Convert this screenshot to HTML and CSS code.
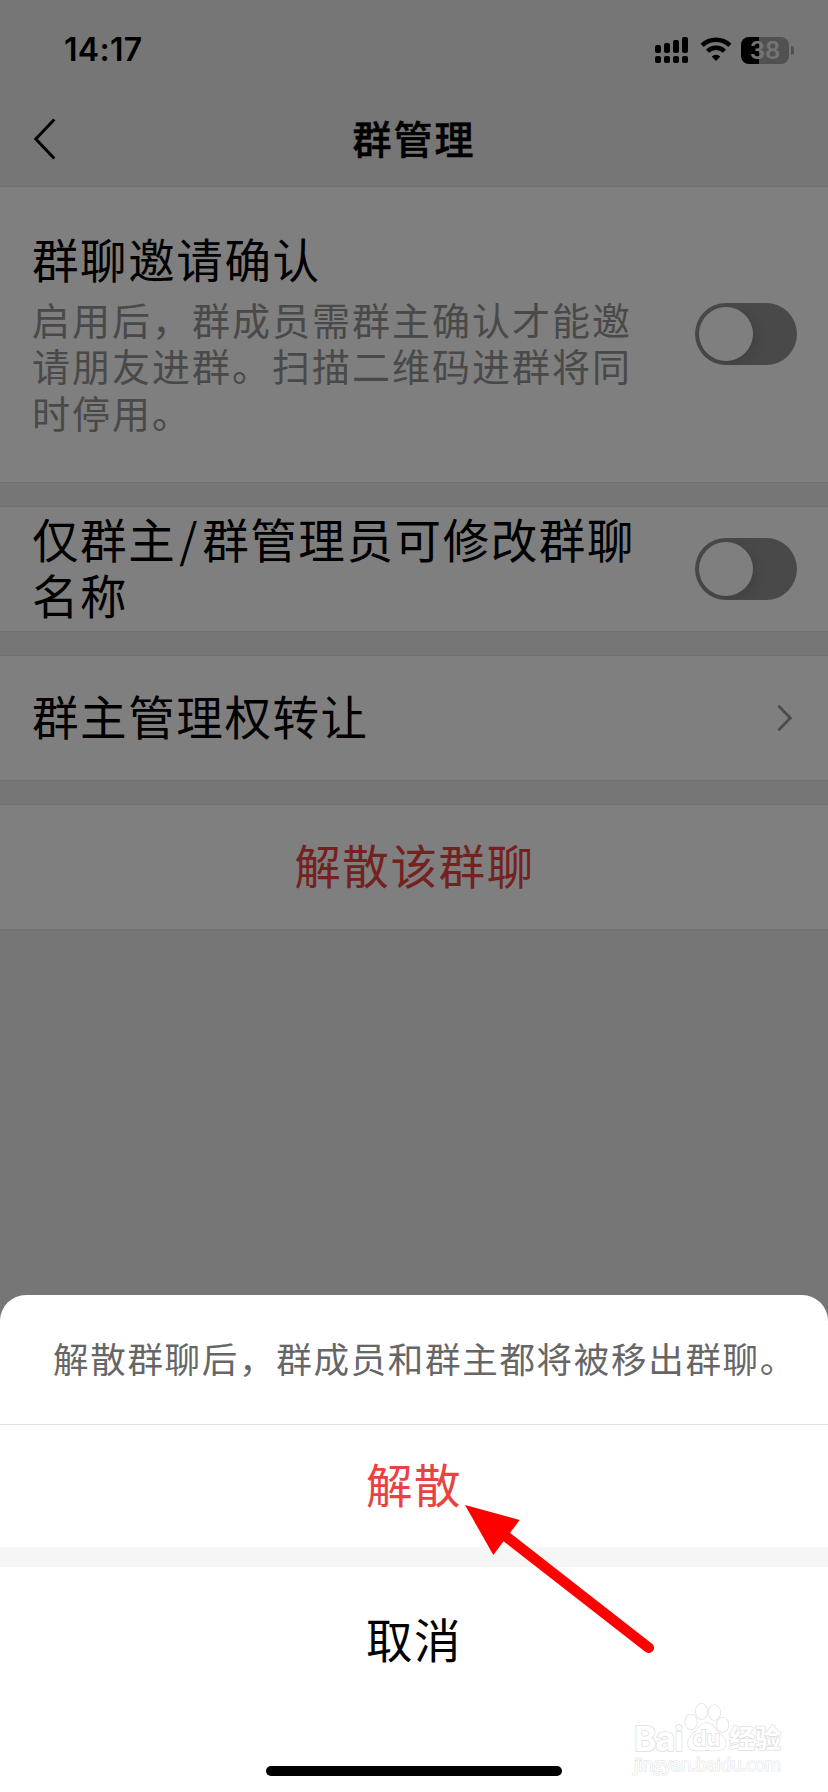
FILE: index.html
```html
<!DOCTYPE html>
<html lang="zh-CN">
<head>
    <meta charset="UTF-8">
    <meta name="viewport" content="width=device-width, initial-scale=1.0">
    <title>群管理</title>
    <link rel="stylesheet" href="styles.css">
</head>
<body>
    <div class="page">
        <div class="status-bar">
            <span class="time">14:17</span>
            <div class="status-icons">
                <svg class="signal" width="34" height="28" viewBox="0 0 34 28">
                    <rect x="0" y="9" width="6" height="8" rx="2"/>
                    <rect x="9" y="7" width="6" height="10" rx="2"/>
                    <rect x="18" y="4" width="6" height="13" rx="2"/>
                    <rect x="27" y="1" width="6" height="16" rx="2"/>
                    <rect x="0" y="20" width="6" height="7" rx="2"/>
                    <rect x="9" y="20" width="6" height="7" rx="2"/>
                    <rect x="18" y="20" width="6" height="7" rx="2"/>
                    <rect x="27" y="20" width="6" height="7" rx="2"/>
                </svg>
                <svg class="wifi" width="34" height="28" viewBox="0 0 34 28">
                    <path d="M2.2 9.4 A19.6 19.6 0 0 1 29.8 9.4" fill="none" stroke="#000" stroke-width="4.6"/>
                    <path d="M7.6 15.2 A11.9 11.9 0 0 1 24.4 15.2" fill="none" stroke="#000" stroke-width="4.4"/>
                    <path d="M11.7 20.5 A6.1 6.1 0 0 1 20.3 20.5 L16 25 Z"/>
                </svg>
                <div class="battery"><span>38</span></div>
                <div class="battery-cap"></div>
            </div>
        </div>

        <div class="nav-bar">
            <svg class="back" width="24" height="44" viewBox="0 0 24 44">
                <path d="M21.3 2.5 L2.8 22 L21.3 41.5" fill="none" stroke="#000" stroke-width="3"/>
            </svg>
            <h1>群管理</h1>
        </div>

        <div class="cell cell-tall">
            <div class="cell-text">
                <h2>群聊邀请确认</h2>
                <p>启用后，群成员需群主确认才能邀请朋友进群。扫描二维码进群将同时停用。</p>
            </div>
            <div class="switch"><div class="knob"></div></div>
        </div>
        <div class="cell">
            <div class="cell-text">
                <h2>仅群主<span class="slash">/</span>群管理员可修改群聊名称</h2>
            </div>
            <div class="switch"><div class="knob"></div></div>
        </div>
        <div class="cell">
            <div class="cell-text">
                <h2>群主管理权转让</h2>
            </div>
            <svg class="arrow-right" width="16" height="28" viewBox="0 0 16 28">
                <path d="M1.5 1.8 L13.3 14 L1.5 26.2" fill="none" stroke="#969696" stroke-width="2.8"/>
            </svg>
        </div>
        <div class="cell cell-center">
            <h2 class="danger">解散该群聊</h2>
        </div>
    </div>

    <div class="mask"></div>

    <div class="sheet">
        <p class="sheet-message">解散群聊后，群成员和群主都将被移出群聊。</p>
        <div class="sheet-item danger">解散</div>
        <div class="sheet-gap"></div>
        <div class="sheet-item cancel">取消</div>
        <div class="home-bar"></div>
    </div>

    <div class="watermark">
        <div class="brand">
            <span class="bai">Bai</span>
            <svg class="paw" width="48" height="50" viewBox="0 0 48 50">
                <g fill="#fff" stroke="#e2e2e2" stroke-width="1.5">
                    <ellipse cx="7" cy="20" rx="5.8" ry="7.3"/>
                    <ellipse cx="17.5" cy="9.3" rx="5.8" ry="7.6"/>
                    <ellipse cx="30.5" cy="10.5" rx="5.8" ry="7.6"/>
                    <ellipse cx="38.7" cy="22.8" rx="5.8" ry="7.3"/>
                    <path d="M22.5 21 C28.5 21 30.5 26 34 30 C37.5 33.5 42 36 41.8 41.5 C41.5 48 36 49.5 22.5 48 C9 49.5 4 48 4 41 C4 36 8 33.5 11.5 29.5 C15 25.5 17 21 22.5 21 Z"/>
                </g>
                <text x="22.5" y="44" text-anchor="middle">du</text>
            </svg>
            <span class="jingyan">经验</span>
        </div>
        <div class="site">jingyan.baidu.com</div>
    </div>

    <svg class="pointer" width="200" height="160" viewBox="0 0 200 160">
        <path d="M5 5 L59.7 20 L33.3 55 Z" fill="#f00"/>
        <path d="M46 36.5 L188.8 147.8" stroke="#f00" stroke-width="10.5" stroke-linecap="round"/>
    </svg>
</body>
</html>
```
FILE: styles.css
```css
:root {
    --bg: #ededed;
    --line: #e2e2e2;
    --danger: #e84340;
}

* {
    margin: 0;
    padding: 0;
    box-sizing: border-box;
}

body {
    width: 828px;
    height: 1792px;
    position: relative;
    overflow: hidden;
    background: var(--bg);
    color: #000;
    font-family: "Noto Sans CJK SC", sans-serif;
}

/* status bar */
.status-bar {
    display: flex;
    justify-content: space-between;
    align-items: center;
    height: 100px;
    padding: 0 34px 0 64px;
}

.time {
    font: 600 32px/40px Inter, sans-serif;
    letter-spacing: 0.3px;
}

.status-icons {
    display: flex;
    align-items: center;
}

.signal {
    margin-right: 11px;
}

.wifi {
    margin-right: 7px;
}

.battery {
    width: 48px;
    height: 27px;
    border-radius: 8px;
    background: linear-gradient(90deg, #000 18px, #a2a2a2 18px);
    color: #e8e8e8;
    font: 600 24px/27px Inter, sans-serif;
    text-align: center;
}

.battery-cap {
    width: 3px;
    height: 9px;
    margin-left: 2px;
    border-radius: 0 4px 4px 0;
    background: #a2a2a2;
}

/* nav bar */
.nav-bar {
    display: grid;
    grid-template-columns: 60px 1fr 60px;
    align-items: center;
    height: 86px;
    padding: 0 33px 8px;
}

.nav-bar h1 {
    font-size: 39px;
    font-weight: 500;
    line-height: 50px;
    letter-spacing: 2px;
    padding-bottom: 4px;
    text-align: center;
    -webkit-text-stroke: 0.5px #000;
}

/* setting cells */
.cell {
    display: flex;
    justify-content: space-between;
    align-items: center;
    height: 126px;
    margin-bottom: 23px;
    padding: 0 31px 0 32px;
    background: #fff;
    border: solid var(--line);
    border-width: 1px 0;
}

.cell-tall {
    height: 297px;
}

.cell-center {
    justify-content: center;
}

.cell h2 {
    font-size: 46.5px;
    font-weight: 400;
    line-height: 56px;
    letter-spacing: 1.6px;
    padding-bottom: 6px;
}

.cell-tall h2 {
    padding-bottom: 10px;
}

.cell-tall .cell-text {
    padding-bottom: 4px;
}

.cell-text {
    width: 620px;
}

.cell p {
    color: #939393;
    font-size: 38px;
    line-height: 46.5px;
    letter-spacing: 2px;
}

.slash {
    padding: 0 3px;
}

.danger,
.cell .danger {
    color: var(--danger);
}

.switch {
    flex: none;
    width: 102px;
    height: 62px;
    padding: 4px;
    border-radius: 31px;
    background: #929292;
    overflow: hidden;
}

.cell-tall .switch {
    margin-bottom: 2px;
}

.knob {
    width: 54px;
    height: 54px;
    border-radius: 50%;
    background: #fff;
    box-shadow: 3px 3px 12px rgba(0, 0, 0, 0.12);
}

.arrow-right {
    margin-right: 4px;
}

.mask {
    position: absolute;
    inset: 0;
    background: rgba(0, 0, 0, 0.5);
}

/* action sheet */
.sheet {
    position: absolute;
    left: 0;
    right: 0;
    bottom: 0;
    height: 497px;
    border-radius: 26px 26px 0 0;
    background: #fff;
}

.sheet-message {
    height: 130px;
    padding: 39px 0 0 53px;
    border-bottom: 1px solid #e2e2e2;
    color: #666;
    font-size: 35.5px;
    line-height: 48px;
    letter-spacing: 1.7px;
    white-space: nowrap;
}

.sheet-item {
    display: flex;
    justify-content: center;
    align-items: center;
    height: 122px;
    padding-bottom: 7px;
    font-size: 46.5px;
    letter-spacing: 1.6px;
}

.sheet-gap {
    height: 20px;
    background: #f6f6f6;
}

.cancel {
    height: 148px;
}

.home-bar {
    width: 296px;
    height: 10px;
    margin: 51px auto 0;
    border-radius: 5px;
    background: #000;
}

/* watermark in the corner */
.watermark {
    position: absolute;
    left: 634px;
    top: 1702px;
    color: #fff;
    -webkit-text-stroke: 1.5px #dedede;
    paint-order: stroke fill;
}

.brand {
    display: flex;
    align-items: flex-end;
    height: 50px;
}

.bai {
    width: 50px;
    font: 700 34px/36px Inter, sans-serif;
    letter-spacing: -1px;
    margin-bottom: -5px;
}

.paw text {
    font: 700 22px Inter, sans-serif;
    fill: #fff;
    stroke: #dedede;
    stroke-width: 1.5px;
}

.jingyan {
    font-size: 26px;
    font-weight: 700;
    line-height: 30px;
    margin-left: -3px;
}

.site {
    font: 400 17.3px/26px "Open Sans", sans-serif;
    -webkit-text-stroke: 1.2px #e2e2e2;
}

.pointer {
    position: absolute;
    left: 460px;
    top: 1500px;
}
```
